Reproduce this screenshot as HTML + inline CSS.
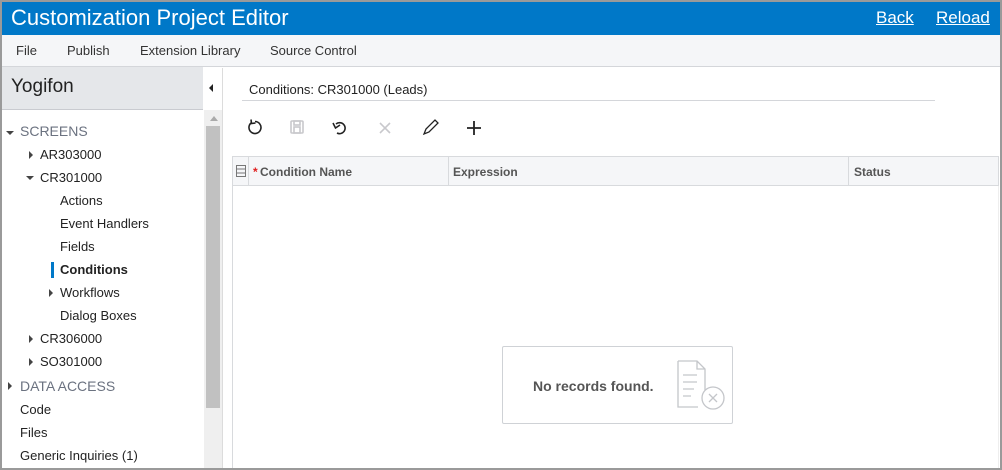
<!DOCTYPE html>
<html><head><style>
*{margin:0;padding:0;box-sizing:border-box}
body{width:1002px;height:470px;overflow:hidden;font-family:"Liberation Sans",Arial,sans-serif;background:#fff;position:relative}
.frame{position:absolute;left:0;top:0;width:1002px;height:470px;border:2px solid #9a9a9a;border-top-width:2px}
.hdr{position:absolute;left:2px;top:2px;width:998px;height:33px;background:#0078c8;color:#fff}
.hdr .t{position:absolute;left:9px;top:3px;font-size:22px}
.hdr a{position:absolute;top:6px;font-size:17px;color:#fff;text-decoration:underline}
.menu{position:absolute;left:2px;top:35px;width:998px;height:32px;background:#f5f6f8;border-bottom:1px solid #d4d6da;font-size:13px;color:#333}
.menu span{position:absolute;top:8px}
.yog{position:absolute;left:2px;top:67px;width:201px;height:43px;background:#e5e7ea;border-bottom:1px solid #c9cbd0;font-size:19px;color:#222;padding:9px 0 0 9px}
.tab{position:absolute;left:203px;top:71px;width:19px;height:33px;background:#fff}
.sb{position:absolute;left:204px;top:110px;width:18px;height:358px;background:#efefef}
.thumb{position:absolute;left:206px;top:126px;width:14px;height:282px;background:#c1c1c1}
.main{position:absolute;left:222px;top:68px;border-left:1px solid #dcdcdc;height:400px}
.it{position:absolute;font-size:13px;color:#222;white-space:nowrap}
.sec{font-size:14px;color:#6b7280}
.arr{position:absolute;width:0;height:0}
.ar{border-top:4px solid transparent;border-bottom:4px solid transparent;border-left:4px solid #444}
.ad{border-left:4px solid transparent;border-right:4px solid transparent;border-top:4px solid #444}
.gh{position:absolute;left:232px;top:156px;width:767px;height:30px;background:#f5f6f8;border:1px solid #d8dadd;font-size:12px;color:#555;font-weight:bold}
.gh span{position:absolute;top:8px}
.gh i{position:absolute;top:0;width:1px;height:28px;background:#d8dadd}
</style></head><body>
<div class="hdr"><span class="t">Customization Project Editor</span><a style="left:874px">Back</a><a style="left:934px">Reload</a></div>
<div class="menu"><span style="left:14px">File</span><span style="left:65px">Publish</span><span style="left:138px">Extension Library</span><span style="left:268px">Source Control</span></div>
<div class="yog">Yogifon</div>
<div class="tab"><div class="arr" style="left:6px;top:13px;border-top:4px solid transparent;border-bottom:4px solid transparent;border-right:4px solid #222"></div></div>
<div class="sb"></div><div class="thumb"></div>
<div class="arr" style="left:210px;top:116px;border-left:4px solid transparent;border-right:4px solid transparent;border-bottom:5px solid #aaa"></div>
<div class="arr ad" style="left:6px;top:131px"></div><div class="it sec" style="left:20px;top:123px">SCREENS</div>
<div class="arr ar" style="left:29px;top:151px"></div><div class="it" style="left:40px;top:147px">AR303000</div>
<div class="arr ad" style="left:26px;top:176px"></div><div class="it" style="left:40px;top:170px">CR301000</div>
<div class="it" style="left:60px;top:193px">Actions</div>
<div class="it" style="left:60px;top:216px">Event Handlers</div>
<div class="it" style="left:60px;top:239px">Fields</div>
<div style="position:absolute;left:51px;top:262px;width:3px;height:16px;background:#0078c8"></div>
<div class="it" style="left:60px;top:262px;font-weight:bold">Conditions</div>
<div class="arr ar" style="left:49px;top:289px"></div><div class="it" style="left:60px;top:285px">Workflows</div>
<div class="it" style="left:60px;top:308px">Dialog Boxes</div>
<div class="arr ar" style="left:29px;top:335px"></div><div class="it" style="left:40px;top:331px">CR306000</div>
<div class="arr ar" style="left:29px;top:358px"></div><div class="it" style="left:40px;top:354px">SO301000</div>
<div class="arr ar" style="left:8px;top:382px"></div><div class="it sec" style="left:20px;top:378px">DATA ACCESS</div>
<div class="it" style="left:20px;top:402px">Code</div>
<div class="it" style="left:20px;top:425px">Files</div>
<div class="it" style="left:20px;top:448px">Generic Inquiries (1)</div>
<div class="main"></div>
<div class="it" style="left:249px;top:82px;font-size:13px">Conditions: CR301000 (Leads)</div>
<div style="position:absolute;left:242px;top:100px;width:693px;height:1px;background:#d4d6da"></div>
<svg style="position:absolute;left:240px;top:114px" width="250" height="30" fill="none" stroke-width="1.6">
<path d="M11 9 A6 6 0 1 0 15 7.5" stroke="#222"/><path d="M11 5.5 L11.5 9.5 L15.5 9" stroke="#222"/>
<rect x="51" y="7" width="12" height="12" rx="1" stroke="#c8c8cc"/><rect x="54" y="7" width="6" height="4" stroke="#c8c8cc"/><rect x="54" y="13" width="6" height="6" stroke="#c8c8cc"/>
<path d="M96 10 A5.5 5.5 0 1 1 97 19" stroke="#222"/><path d="M93 9 L95.5 14 L100 11" stroke="#222"/>
<path d="M140 9 L150 19 M150 9 L140 19" stroke="#c8c8cc"/>
<path d="M184 20 L186 15 L195 6 L198 9 L189 18 Z" stroke="#222" stroke-width="1.3"/>
<path d="M234 7 V21 M227 14 H241" stroke="#222" stroke-width="1.8"/>
</svg>
<div class="gh"><svg style="position:absolute;left:3px;top:8px" width="10" height="12"><rect x="0.5" y="0.5" width="9" height="11" fill="none" stroke="#777"/><path d="M1 4H9M1 8H9" stroke="#777"/></svg>
<i style="left:15px"></i><span style="left:20px;color:#e02020">*</span><span style="left:27px">Condition Name</span>
<i style="left:215px"></i><span style="left:220px">Expression</span>
<i style="left:615px"></i><span style="left:621px">Status</span></div>
<div style="position:absolute;left:232px;top:186px;width:1px;height:282px;background:#d8dadd"></div>
<div style="position:absolute;left:998px;top:186px;width:1px;height:282px;background:#eee"></div>
<div style="position:absolute;left:502px;top:346px;width:231px;height:78px;border:1px solid #cfd2d6;border-radius:2px;background:#fff">
<div style="position:absolute;left:30px;top:31px;font-size:14px;color:#555;font-weight:bold">No records found.</div>
<svg style="position:absolute;left:173px;top:12px" width="56" height="54" fill="none" stroke="#c4c6ca" stroke-width="1.3">
<path d="M2 2 H21 L29 10 V33 M2 2 V48 H22 M21 2 V10 H29 M7 16 H21 M7 23 H21 M7 30 H18 M7 37 H15"/>
<circle cx="37" cy="39" r="11" fill="#fff"/><path d="M33 35 L41 43 M41 35 L33 43"/>
</svg></div>
<div class="frame"></div>
</body></html>
